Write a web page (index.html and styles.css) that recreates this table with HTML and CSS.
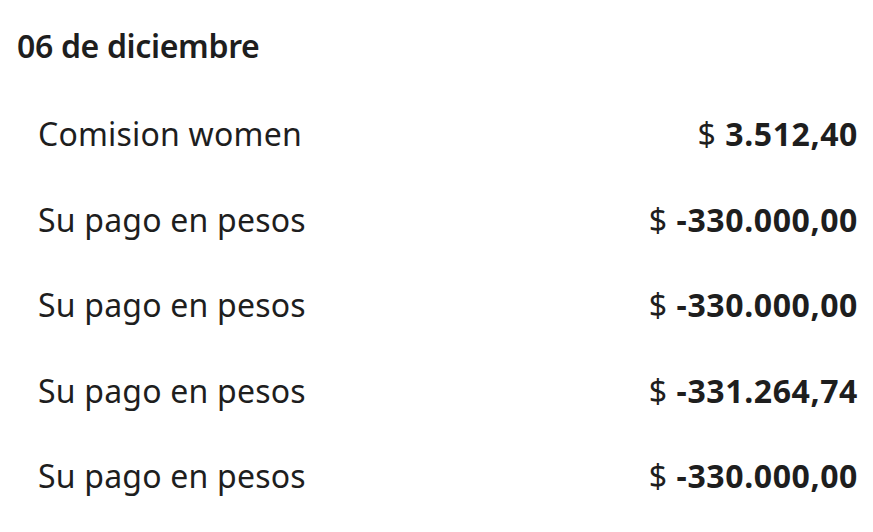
FILE: index.html
```html
<!DOCTYPE html>
<html lang="es">
<head>
<meta charset="utf-8">
<link rel="stylesheet" href="styles.css">
</head>
<body>
<div class="page">
  <h2 class="date">06 de diciembre</h2>
  <ul class="list">
    <li class="row"><span class="label">Comision women</span><span class="amount">$ <b>3.512,40</b></span></li>
    <li class="row"><span class="label">Su pago en pesos</span><span class="amount">$ <b>-330.000,00</b></span></li>
    <li class="row"><span class="label">Su pago en pesos</span><span class="amount">$ <b>-330.000,00</b></span></li>
    <li class="row"><span class="label">Su pago en pesos</span><span class="amount">$ <b>-331.264,74</b></span></li>
    <li class="row"><span class="label">Su pago en pesos</span><span class="amount">$ <b>-330.000,00</b></span></li>
  </ul>
</div>
</body>
</html>
```
FILE: styles.css
```css
html, body {
  margin: 0;
  padding: 0;
  background: #ffffff;
}
body {
  font-family: "Noto Sans", "Open Sans", sans-serif;
  color: #1e1e1e;
}
.page {
  padding: 22px 15px 0 17px;
}
.date {
  margin: 0;
  font-size: 32px;
  font-weight: 600;
  line-height: 48px;
  letter-spacing: -0.35px;
}
.list {
  list-style: none;
  margin: 21px 0 0 0;
  padding: 0 0 0 21px;
}
.row {
  display: flex;
  justify-content: space-between;
  align-items: baseline;
  height: 85.5px;
  line-height: 85.5px;
  font-size: 32px;
  letter-spacing: 0.2px;
}
.amount {
  letter-spacing: 0.6px;
}
.amount b {
  font-weight: 700;
}
```
